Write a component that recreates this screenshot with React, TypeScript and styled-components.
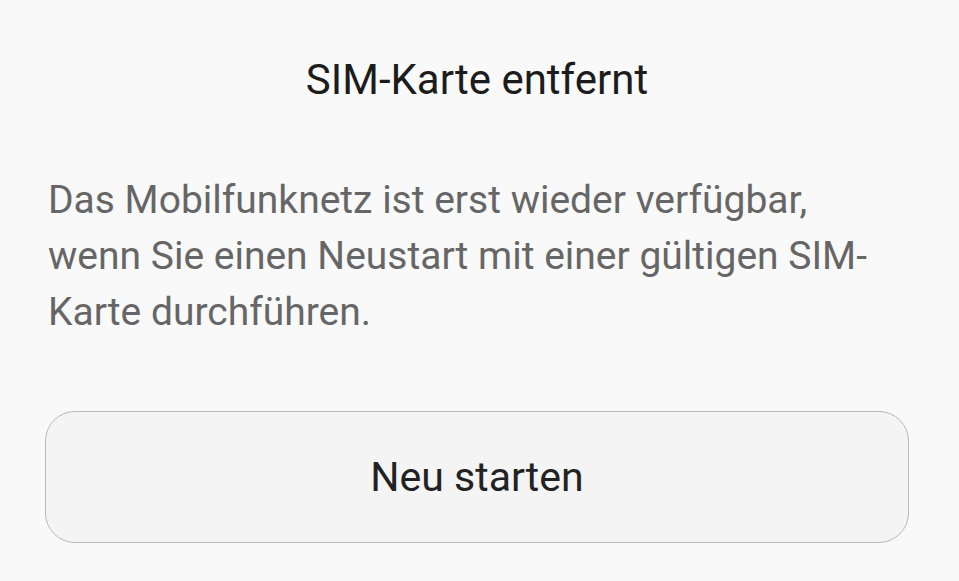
import styled, { createGlobalStyle } from 'styled-components';

const GlobalStyle = createGlobalStyle`
  html, body {
    margin: 0;
    padding: 0;
    background: #f9f9f9;
  }
  body {
    font-family: Roboto, 'Noto Sans', sans-serif;
    -webkit-font-smoothing: antialiased;
  }
`;

const App = () => {
  return (
    <>
      <GlobalStyle />
      <Dialog>
        <Title>SIM-Karte entfernt</Title>
        <Message>
          Das Mobilfunknetz ist erst wieder verfügbar,
          <br />
          wenn Sie einen Neustart mit einer gültigen SIM-
          <br />
          Karte durchführen.
        </Message>
        <RestartButton type='button'>Neu starten</RestartButton>
      </Dialog>
    </>
  );
};

export default App;

const Dialog = styled.div`
  display: flex;
  flex-direction: column;
  width: 959px;
  height: 581px;
  box-sizing: border-box;
  padding: 52px 50px 0 45px;
  background: #f9f9f9;
`;

const Title = styled.h1`
  margin: 0;
  font-size: 42px;
  font-weight: 400;
  line-height: 56px;
  text-align: center;
  color: #1c1c1c;
`;

const Message = styled.p`
  margin: 64px 0 0 3px;
  font-size: 39px;
  font-weight: 400;
  line-height: 56px;
  color: #666666;
`;

const RestartButton = styled.button`
  margin-top: 71px;
  height: 132px;
  border: 1.5px solid #b8b8b8;
  border-radius: 30px;
  background: #f4f4f4;
  font-family: Roboto, 'Noto Sans', sans-serif;
  font-size: 41px;
  font-weight: 400;
  color: #222222;
  cursor: pointer;
`;
